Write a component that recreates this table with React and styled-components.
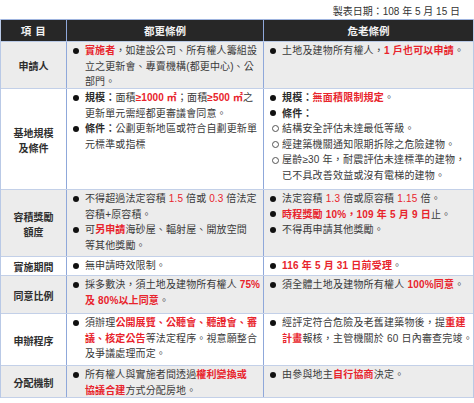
import React from "react";
import styled, { createGlobalStyle } from "styled-components";

const Global = createGlobalStyle`
  html, body { margin: 0; padding: 0; background: #ffffff; }
  body { font-family: "Liberation Sans", "Noto Sans CJK TC", sans-serif; }
`;

const Page = styled.div`
  width: 474px;
  color: #3a3a3a;
`;

const DateLine = styled.div`
  height: 19px;
  box-sizing: border-box;
  padding: 4px 14px 0 0;
  text-align: right;
  font-size: 10px;
  line-height: 15px;
  color: #333;
`;

const Table = styled.div`
  width: 474px;
  box-sizing: border-box;
  border-left: 1px solid #b9c9e6;
  border-right: 1px solid #b9c9e6;
`;

const Row = styled.div`
  display: grid;
  grid-template-columns: 66px 197px 1fr;
  height: ${(p) => p.$h}px;
  box-sizing: border-box;
  background: ${(p) => (p.$gray ? "#ececec" : "#ffffff")};
  border-bottom: 1px solid #c3d0e8;
`;

const HeadRow = styled(Row)`
  background: #272727;
  border-top: 1px solid #9fb4de;
  border-bottom: 1px solid #b9c9e6;
`;

const HeadCell = styled.div`
  display: flex;
  align-items: center;
  justify-content: center;
  color: #f2f2f2;
  font-size: 10.5px;
  font-weight: 700;
  letter-spacing: ${(p) => (p.$wide ? "0.5px" : "0")};
  border-right: ${(p) => (p.$last ? "none" : "1.5px solid #8fa8da")};
`;

const Label = styled.div`
  display: flex;
  align-items: center;
  justify-content: center;
  text-align: center;
  font-size: 10px;
  font-weight: 700;
  line-height: 15px;
  color: #2e2e2e;
  border-right: 1.5px solid #8fa8da;
  padding-top: 3px;
`;

const Cell = styled.div`
  padding: 1px 0 0 5px;
  font-size: 10px;
  line-height: 15.6px;
  letter-spacing: ${(p) => (p.$last ? "0.2px" : "0.12px")};
  border-right: ${(p) => (p.$last ? "none" : "1.5px solid #8fa8da")};
  overflow: hidden;
`;

const Item = styled.div`
  display: flex;
  align-items: flex-start;
`;

const Marker = styled.span`
  flex: 0 0 13px;
  height: 15.6px;
  display: flex;
  align-items: center;
  padding-left: 1px;
  box-sizing: border-box;
  &::before {
    content: "";
    display: block;
    width: ${(p) => (p.$hollow ? "5px" : "6px")};
    height: ${(p) => (p.$hollow ? "5px" : "6px")};
    border-radius: 50%;
    background: ${(p) => (p.$hollow ? "transparent" : "#111")};
    border: ${(p) => (p.$hollow ? "1px solid #555" : "none")};
    margin-left: ${(p) => (p.$hollow ? "2px" : "0")};
  }
`;

const Text = styled.span`
  flex: 1;
  white-space: nowrap;
`;

const Red = styled.span`
  color: #e8242c;
  font-weight: ${(p) => (p.$light ? 400 : 700)};
`;

const B = styled.b`
  color: #2b2b2b;
  font-weight: 700;
`;

const Li = ({ hollow, children }) => (
  <Item>
    <Marker $hollow={hollow} />
    <Text>{children}</Text>
  </Item>
);

export default function App() {
  return (
    <Page>
      <Global />
      <DateLine>製表日期：108 年 5 月 15 日</DateLine>
      <Table>
        <HeadRow $h={23}>
          <HeadCell $wide>項 目</HeadCell>
          <HeadCell>都更條例</HeadCell>
          <HeadCell $last>危老條例</HeadCell>
        </HeadRow>

        <Row $h={47} $gray>
          <Label>申請人</Label>
          <Cell>
            <Li>
              <Red>實施者</Red>，如建設公司、所有權人籌組設
              <br />
              立之更新會、專賣機構(都更中心)、公
              <br />
              部門。
            </Li>
          </Cell>
          <Cell $last>
            <Li>
              土地及建物所有權人，<Red>1 戶也可以申請</Red>。
            </Li>
          </Cell>
        </Row>

        <Row $h={101}>
          <Label>
            基地規模
            <br />
            及條件
          </Label>
          <Cell>
            <Li>
              <B>規模：</B>面積<Red>≥1000 ㎡</Red>；面積<Red>≥500 ㎡</Red>之
              <br />
              更新單元需經都更審議會同意。
            </Li>
            <Li>
              <B>條件：</B>公劃更新地區或符合自劃更新單
              <br />
              元標準或指標
            </Li>
          </Cell>
          <Cell $last>
            <Li>
              <B>規模：</B>
              <Red>無面積限制規定</Red>。
            </Li>
            <Li>
              <B>條件：</B>
            </Li>
            <Li hollow>結構安全評估未達最低等級。</Li>
            <Li hollow>經建築機關通知限期拆除之危險建物。</Li>
            <Li hollow>
              屋齡≥30 年，耐震評估未達標準的建物，
              <br />
              已不具改善效益或沒有電梯的建物。
            </Li>
          </Cell>
        </Row>

        <Row $h={67} $gray>
          <Label>
            容積獎勵
            <br />
            額度
          </Label>
          <Cell>
            <Li>
              不得超過法定容積 <Red $light>1.5</Red> 倍或 <Red $light>0.3</Red> 倍法定
              <br />
              容積+原容積。
            </Li>
            <Li>
              可<Red>另申請</Red>海砂屋、輻射屋、開放空間
              <br />
              等其他獎勵。
            </Li>
          </Cell>
          <Cell $last>
            <Li>
              法定容積 <Red $light>1.3</Red> 倍或原容積 <Red $light>1.15</Red> 倍。
            </Li>
            <Li>
              <Red>時程獎勵 10%，109 年 5 月 9 日</Red>止。
            </Li>
            <Li>不得再申請其他獎勵。</Li>
          </Cell>
        </Row>

        <Row $h={19}>
          <Label>實施期間</Label>
          <Cell>
            <Li>無申請時效限制。</Li>
          </Cell>
          <Cell $last>
            <Li>
              <Red>116 年 5 月 31 日前受理</Red>。
            </Li>
          </Cell>
        </Row>

        <Row $h={38} $gray>
          <Label>同意比例</Label>
          <Cell>
            <Li>
              採多數決，須土地及建物所有權人 <Red>75%</Red>
              <br />
              <Red>及 80%以上同意</Red>。
            </Li>
          </Cell>
          <Cell $last>
            <Li>
              須全體土地及建物所有權人 <Red>100%同意</Red>。
            </Li>
          </Cell>
        </Row>

        <Row $h={52}>
          <Label>申辦程序</Label>
          <Cell>
            <Li>
              須辦理<Red>公開展覽、公聽會、聽證會、審</Red>
              <br />
              <Red>議、核定公告</Red>等法定程序。視意願整合
              <br />
              及爭議處理而定。
            </Li>
          </Cell>
          <Cell $last>
            <Li>
              經評定符合危險及老舊建築物後，提<Red>重建</Red>
              <br />
              <Red>計畫</Red>報核，主管機關於 60 日內審查完竣。
            </Li>
          </Cell>
        </Row>

        <Row $h={32} $gray>
          <Label>分配機制</Label>
          <Cell>
            <Li>
              所有權人與實施者間透過<Red>權利變換或</Red>
              <br />
              <Red>協議合建</Red>方式分配房地。
            </Li>
          </Cell>
          <Cell $last>
            <Li>
              由參與地主<Red>自行協商</Red>決定。
            </Li>
          </Cell>
        </Row>
      </Table>
    </Page>
  );
}
